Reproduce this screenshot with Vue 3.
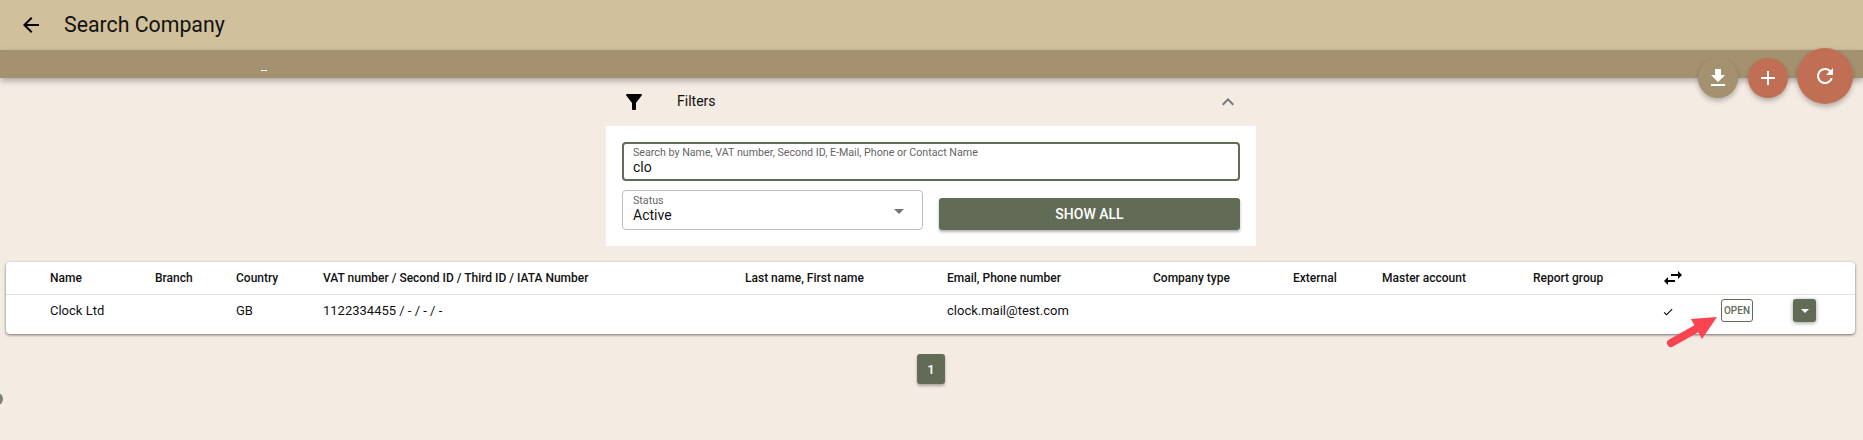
<script setup>
const headers = ['Name', 'Branch', 'Country', 'VAT number / Second ID / Third ID / IATA Number', 'Last name, First name', 'Email, Phone number', 'Company type', 'External', 'Master account', 'Report group']
const cells = ['Clock Ltd', '', 'GB', '1122334455 / - / - / -', '', 'clock.mail@test.com', '', '', '', '']
</script>

<template>
  <div class="page">
    <header class="top">
      <svg class="back" viewBox="0 0 24 24"><path d="M20 11H7.83l5.59-5.59L12 4l-8 8 8 8 1.41-1.41L7.83 13H20v-2z" /></svg>
      <h1>Search Company</h1>
    </header>
    <div class="sub"><span class="dash"></span></div>

    <div class="fabs">
      <button class="fab small tan">
        <svg viewBox="0 0 24 24"><path d="M19 9h-4V3H9v6H5l7 7 7-7zM5 18v2h14v-2H5z" /></svg>
      </button>
      <button class="fab small red">
        <svg viewBox="0 0 24 24"><path d="M19 13h-6v6h-2v-6H5v-2h6V5h2v6h6v2z" /></svg>
      </button>
      <button class="fab big red">
        <svg viewBox="0 0 24 24"><path d="M17.65 6.35A7.96 7.96 0 0 0 12 4a8 8 0 1 0 7.73 10h-2.08A6 6 0 1 1 12 6c1.66 0 3.14.69 4.22 1.78L13 11h7V4l-2.35 2.35z" /></svg>
      </button>
    </div>

    <section class="filters">
      <div class="filters-head">
        <svg class="funnel" viewBox="0 0 24 24"><path d="M4.25 5.61C6.27 8.2 10 13 10 13v6c0 .55.45 1 1 1h2c.55 0 1-.45 1-1v-6s3.72-4.8 5.74-7.39A1 1 0 0 0 18.95 4H5.04a1 1 0 0 0-.79 1.61z" /></svg>
        <span class="filters-title">Filters</span>
        <svg class="chev" viewBox="0 0 24 24"><path d="M7.41 15.41 12 10.83l4.59 4.58L18 14l-6-6-6 6z" /></svg>
      </div>
      <div class="filters-body">
        <div class="field focused">
          <label>Search by Name, VAT number, Second ID, E-Mail, Phone or Contact Name</label>
          <span class="value">clo</span>
        </div>
        <div class="row2">
          <div class="field select">
            <label>Status</label>
            <span class="value">Active</span>
            <i class="caret"></i>
          </div>
          <button class="show-all">SHOW ALL</button>
        </div>
      </div>
    </section>

    <section class="card">
      <div class="grid head">
        <span v-for="h in headers" :key="h">{{ h }}</span>
        <svg class="swap" viewBox="0 0 24 24"><path d="M6.99 11 3 15l3.99 4v-3H14v-2H6.99v-3zM21 9l-3.99-4v3H10v2h7.01v3L21 9z" /></svg>
        <span></span><span></span>
      </div>
      <div class="grid body">
        <span v-for="(c, i) in cells" :key="i">{{ c }}</span>
        <svg class="check" viewBox="0 0 24 24"><path d="M9 16.17 4.83 12l-1.42 1.41L9 19 21 7l-1.41-1.41z" /></svg>
        <button class="open">OPEN</button>
        <button class="more"><i></i></button>
      </div>
      <svg class="arrow" viewBox="0 0 52 36">
        <path d="M5 27 30 13" fill="none" stroke="#fb4450" stroke-width="8" stroke-linecap="round" />
        <path d="M51 1 25 3 36 23z" fill="#fb4450" />
      </svg>
    </section>

    <nav class="pager"><button>1</button></nav>
    <i class="edge"></i>
  </div>
</template>

<style>
html, body { margin: 0; background: #f4ebe3; }
</style>

<style scoped>
.page {
  position: relative;
  height: 440px;
  overflow: hidden;
  background: #f4ebe3;
  font-family: Roboto, "Liberation Sans", sans-serif;
  color: #111;
}
.top {
  height: 50px;
  box-sizing: border-box;
  background: #d0c09b;
  display: flex;
  align-items: center;
  padding-left: 19px;
}
.back { width: 24px; height: 24px; fill: #000; margin-right: 21px; }
h1 { margin: 0; font-size: 21.3px; font-weight: 400; color: #111; position: relative; top: -1px; }
.sub {
  height: 28px;
  background: #a39170;
  box-shadow: 0 3px 6px rgba(0, 0, 0, .28);
  position: relative;
}
.dash {
  position: absolute;
  left: 261px;
  top: 20px;
  width: 6px;
  height: 1px;
  background: #fff;
}
.fabs {
  position: absolute;
  top: 48px;
  left: 1698px;
  display: flex;
  align-items: flex-start;
  gap: 10px;
}
.fab {
  border: 0;
  padding: 0;
  border-radius: 50%;
  display: flex;
  align-items: center;
  justify-content: center;
  box-shadow: 0 3px 5px rgba(0, 0, 0, .25);
}
.fab svg { width: 24px; height: 24px; fill: #fff; }
.small { width: 40px; height: 40px; margin-top: 10px; }
.big { width: 56px; height: 56px; margin-left: -1px; }
.tan { background: #a39170; }
.red { background: #c06f55; }

.filters { width: 650px; margin: 0 auto; position: relative; left: -0.5px; }
.filters-head {
  height: 48px;
  display: flex;
  align-items: center;
  padding: 0 16px;
  box-sizing: border-box;
}
.funnel { width: 24px; height: 24px; fill: #000; margin-right: 31px; }
.filters-title { font-size: 14px; font-weight: 400; flex: 1; position: relative; top: -1px; }
.chev { width: 24px; height: 24px; fill: #757575; }
.filters-body {
  background: #fff;
  height: 120px;
  box-sizing: border-box;
  padding: 16px 16px 0;
  display: flex;
  flex-direction: column;
  gap: 9px;
}
.field {
  box-sizing: border-box;
  height: 40px;
  border: 1px solid #bdbdbd;
  border-radius: 4px;
  padding: 4px 10px 0;
  position: relative;
  display: flex;
  flex-direction: column;
}
.field label { font-size: 10.7px; line-height: 12px; color: #666; }
.value { font-size: 14px; line-height: 17px; color: #111; }
.focused { height: 39px; border: 2px solid #626b55; padding: 3px 9px 0; }
.row2 { display: flex; gap: 16px; align-items: flex-end; }
.select { width: 301px; flex: none; }
.caret {
  position: absolute;
  right: 18px;
  top: 18px;
  border-left: 5px solid transparent;
  border-right: 5px solid transparent;
  border-top: 5px solid #757575;
}
.show-all {
  flex: 1;
  height: 32px;
  border: 0;
  border-radius: 3px;
  background: #626b55;
  color: #fff;
  font: 500 14px Roboto, sans-serif;
  box-shadow: 0 2px 3px rgba(0, 0, 0, .3);
}

.card {
  position: relative;
  margin: 16px 8px 0 6px;
  height: 72px;
  background: #fff;
  border-radius: 4px;
  box-shadow: 0 1px 3px rgba(0, 0, 0, .55);
}
.grid {
  display: grid;
  grid-template-columns: 105px 81px 87px 422px 202px 206px 140px 89px 151px 131px 57px 72px 40px;
  padding-left: 44px;
  align-items: center;
  font-size: 13px;
}
.head { height: 32px; border-bottom: 1px solid #e0e0e0; font-size: 12px; font-weight: 500; }
.body { height: 32px; padding-top: 5px; align-items: start; }
.body > span { line-height: 22px; }
.swap { width: 24px; height: 24px; fill: #000; margin-left: -3px; }
.check { width: 12px; height: 12px; fill: #000; margin: 6px 0 0 -2px; }
.open {
  width: 32px;
  height: 23px;
  margin-top: -1px;
  padding: 0;
  border: 1px solid #626b55;
  border-radius: 3px;
  background: #fff;
  color: #626b55;
  font: 500 10px Roboto, sans-serif;
}
.more {
  width: 23px;
  height: 23px;
  margin-top: -1px;
  padding: 0;
  border: 0;
  border-radius: 3px;
  background: #626b55;
  display: flex;
  align-items: center;
  justify-content: center;
  box-shadow: 0 1px 4px rgba(0, 0, 0, .4);
}
.more i {
  border-left: 4px solid transparent;
  border-right: 4px solid transparent;
  border-top: 4px solid #fff;
}
.arrow { position: absolute; left: 1660px; top: 54px; width: 52px; height: 36px; }
.pager { display: flex; justify-content: flex-start; padding: 20px 0 0 917px; }
.pager button {
  width: 28px;
  height: 30px;
  padding: 0;
  border: 0;
  border-radius: 3px;
  background: #626b55;
  color: #fff;
  font: 500 13px Roboto, sans-serif;
  box-shadow: 0 2px 3px rgba(0, 0, 0, .3);
}
.edge {
  position: absolute;
  left: -7px;
  top: 393px;
  width: 10px;
  height: 12px;
  border-radius: 50%;
  background: #7d8571;
  filter: blur(.6px);
}
</style>
